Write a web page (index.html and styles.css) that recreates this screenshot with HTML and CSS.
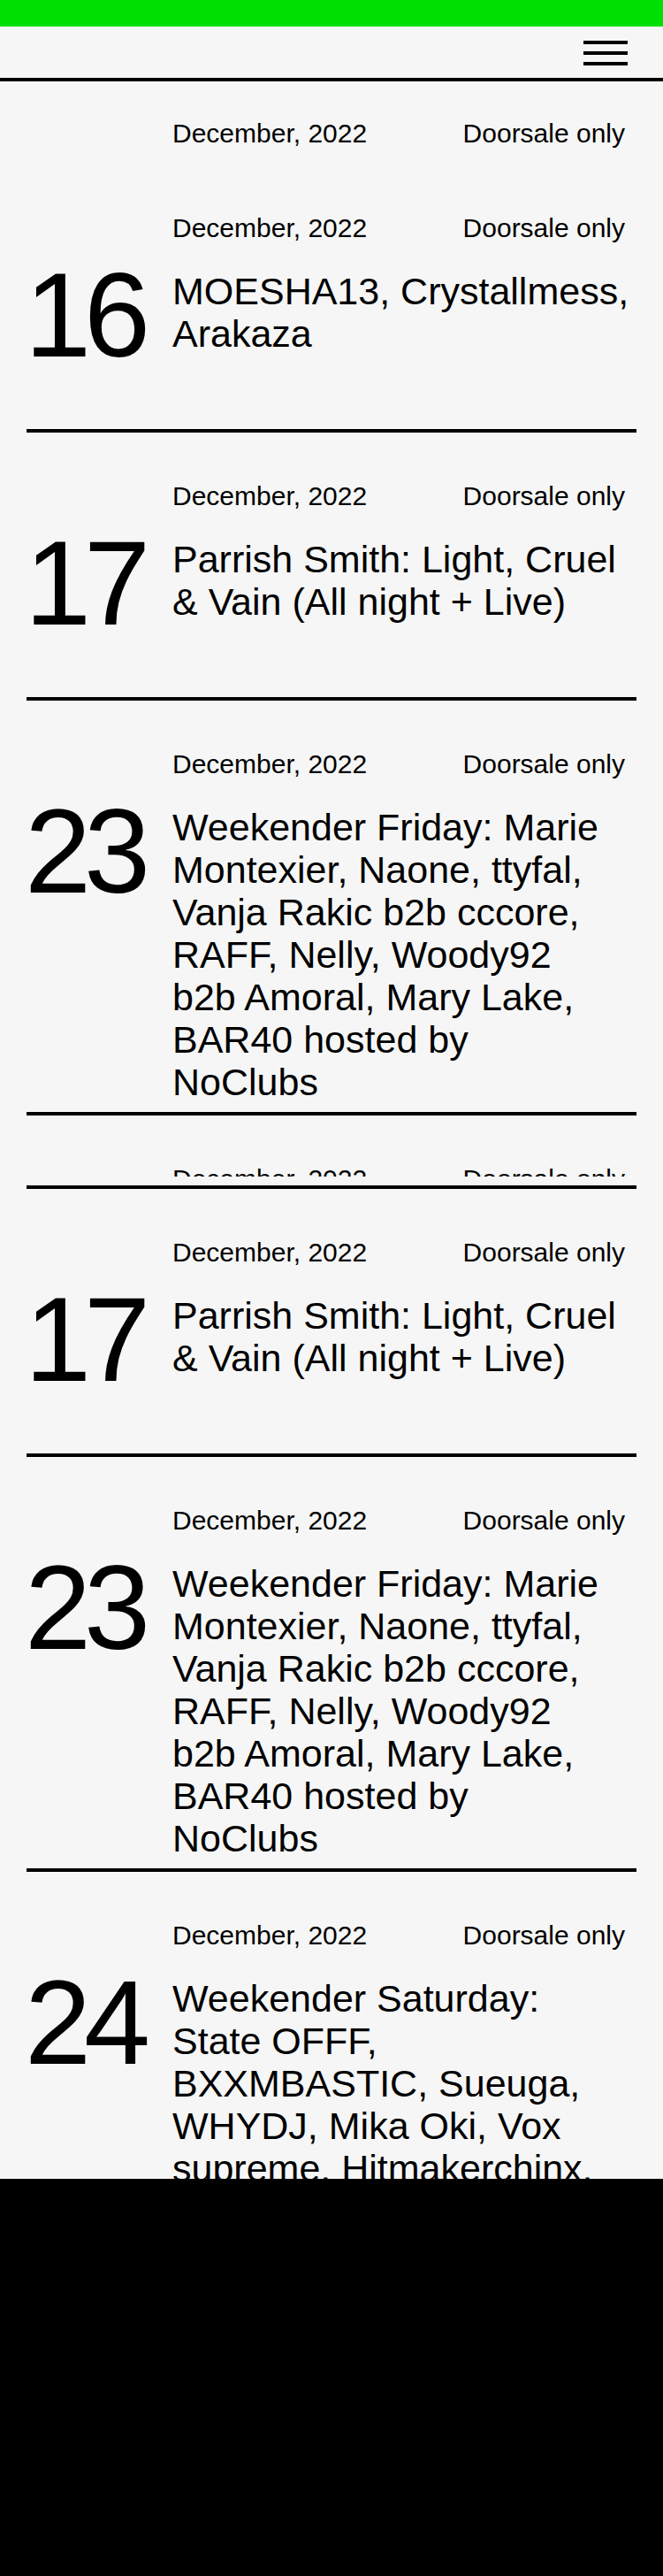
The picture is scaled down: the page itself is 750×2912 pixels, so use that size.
FILE: index.html
```html
<!DOCTYPE html>
<html lang="en">
<head>
<meta charset="utf-8">
<title>Events</title>
<link rel="stylesheet" href="styles.css">
</head>
<body>
<div class="topbar"></div>
<header class="site-header">
  <button class="menu-btn" aria-label="Menu">
    <svg width="50" height="28" viewBox="0 0 50 28" aria-hidden="true">
      <rect x="0" y="0" width="50" height="4"/>
      <rect x="0" y="12" width="50" height="4"/>
      <rect x="0" y="24" width="50" height="4"/>
    </svg>
  </button>
</header>

<main class="events">
  <div class="clip clip--a">
    <article class="event event--lift-a">
      <div class="event-body">
        <div class="event-day"></div>
        <div class="event-info">
          <div class="event-meta"><span>December, 2022</span><span>Doorsale only</span></div>
        </div>
      </div>
    </article>
  </div>

  <div class="clip clip--b">
    <article class="event event--lift-b">
      <div class="event-body">
        <div class="event-day">16</div>
        <div class="event-info">
          <div class="event-meta"><span>December, 2022</span><span>Doorsale only</span></div>
          <h2 class="event-title">MOESHA13, Crystallmess,<br>Arakaza</h2>
        </div>
      </div>
    </article>
  </div>

  <article class="event">
    <div class="event-body">
      <div class="event-day">17</div>
      <div class="event-info">
        <div class="event-meta"><span>December, 2022</span><span>Doorsale only</span></div>
        <h2 class="event-title">Parrish Smith: Light, Cruel<br>&amp; Vain (All night + Live)</h2>
      </div>
    </div>
  </article>

  <article class="event">
    <div class="event-body">
      <div class="event-day">23</div>
      <div class="event-info">
        <div class="event-meta"><span>December, 2022</span><span>Doorsale only</span></div>
        <h2 class="event-title">Weekender Friday: Marie<br>Montexier, Naone, ttyfal,<br>Vanja Rakic b2b cccore,<br>RAFF, Nelly, Woody92<br>b2b Amoral, Mary Lake,<br>BAR40 hosted by<br>NoClubs</h2>
      </div>
    </div>
  </article>

  <article class="event">
    <div class="event-body event-body--peek">
      <div class="event-day"></div>
      <div class="event-info">
        <div class="event-meta"><span>December, 2022</span><span>Doorsale only</span></div>
      </div>
    </div>
  </article>

  <article class="event">
    <div class="event-body">
      <div class="event-day">17</div>
      <div class="event-info">
        <div class="event-meta"><span>December, 2022</span><span>Doorsale only</span></div>
        <h2 class="event-title">Parrish Smith: Light, Cruel<br>&amp; Vain (All night + Live)</h2>
      </div>
    </div>
  </article>

  <article class="event">
    <div class="event-body">
      <div class="event-day">23</div>
      <div class="event-info">
        <div class="event-meta"><span>December, 2022</span><span>Doorsale only</span></div>
        <h2 class="event-title">Weekender Friday: Marie<br>Montexier, Naone, ttyfal,<br>Vanja Rakic b2b cccore,<br>RAFF, Nelly, Woody92<br>b2b Amoral, Mary Lake,<br>BAR40 hosted by<br>NoClubs</h2>
      </div>
    </div>
  </article>

  <div class="clip clip--end">
    <article class="event">
      <div class="event-body">
        <div class="event-day">24</div>
        <div class="event-info">
          <div class="event-meta"><span>December, 2022</span><span>Doorsale only</span></div>
          <h2 class="event-title">Weekender Saturday:<br>State OFFF,<br>BXXMBASTIC, Sueuga,<br>WHYDJ, Mika Oki, Vox<br>supreme, Hitmakerchinx,</h2>
        </div>
      </div>
    </article>
  </div>
</main>

<footer class="site-footer"></footer>
</body>
</html>
```

FILE: styles.css
```css
* {
  box-sizing: border-box;
}

body {
  margin: 0;
  background: #f6f6f6;
  color: #000;
  font-family: "Liberation Sans", Arial, sans-serif;
}

.topbar {
  height: 30px;
  background: #00e000;
}

.site-header {
  height: 62px;
  display: flex;
  justify-content: flex-end;
  align-items: center;
  padding: 2px 40px 0 0;
  border-bottom: 4px solid #000;
}

.menu-btn {
  display: block;
  padding: 0;
  border: 0;
  background: none;
  cursor: pointer;
}

.menu-btn svg {
  display: block;
  fill: #000;
}

.clip {
  overflow: hidden;
}

.clip--a {
  height: 108px;
}

.clip--b {
  height: 289px;
}

.clip--end {
  height: 347px;
}

.event {
  margin: 0 30px;
  padding-bottom: 10px;
  border-bottom: 4px solid #000;
}

.event--lift-a {
  margin-top: -13px;
}

.event--lift-b {
  margin-top: -14px;
}

.event-body {
  display: grid;
  grid-template-columns: 165px 1fr;
  align-items: start;
  min-height: 289px;
  padding-top: 54px;
}

.event-body--peek {
  height: 69px;
  min-height: 0;
  overflow: hidden;
}

.event-day {
  margin: 65px 0 0 -2px;
  font-size: 135px;
  line-height: 104px;
  letter-spacing: -8px;
}

.event-meta {
  display: grid;
  grid-template-columns: 328.6px 1fr;
  font-size: 30px;
  line-height: 36px;
}

.event-title {
  margin: 29px 0 0;
  font-size: 43px;
  line-height: 48px;
  font-weight: 400;
}

.site-footer {
  height: 449px;
  background: #000;
}
```
